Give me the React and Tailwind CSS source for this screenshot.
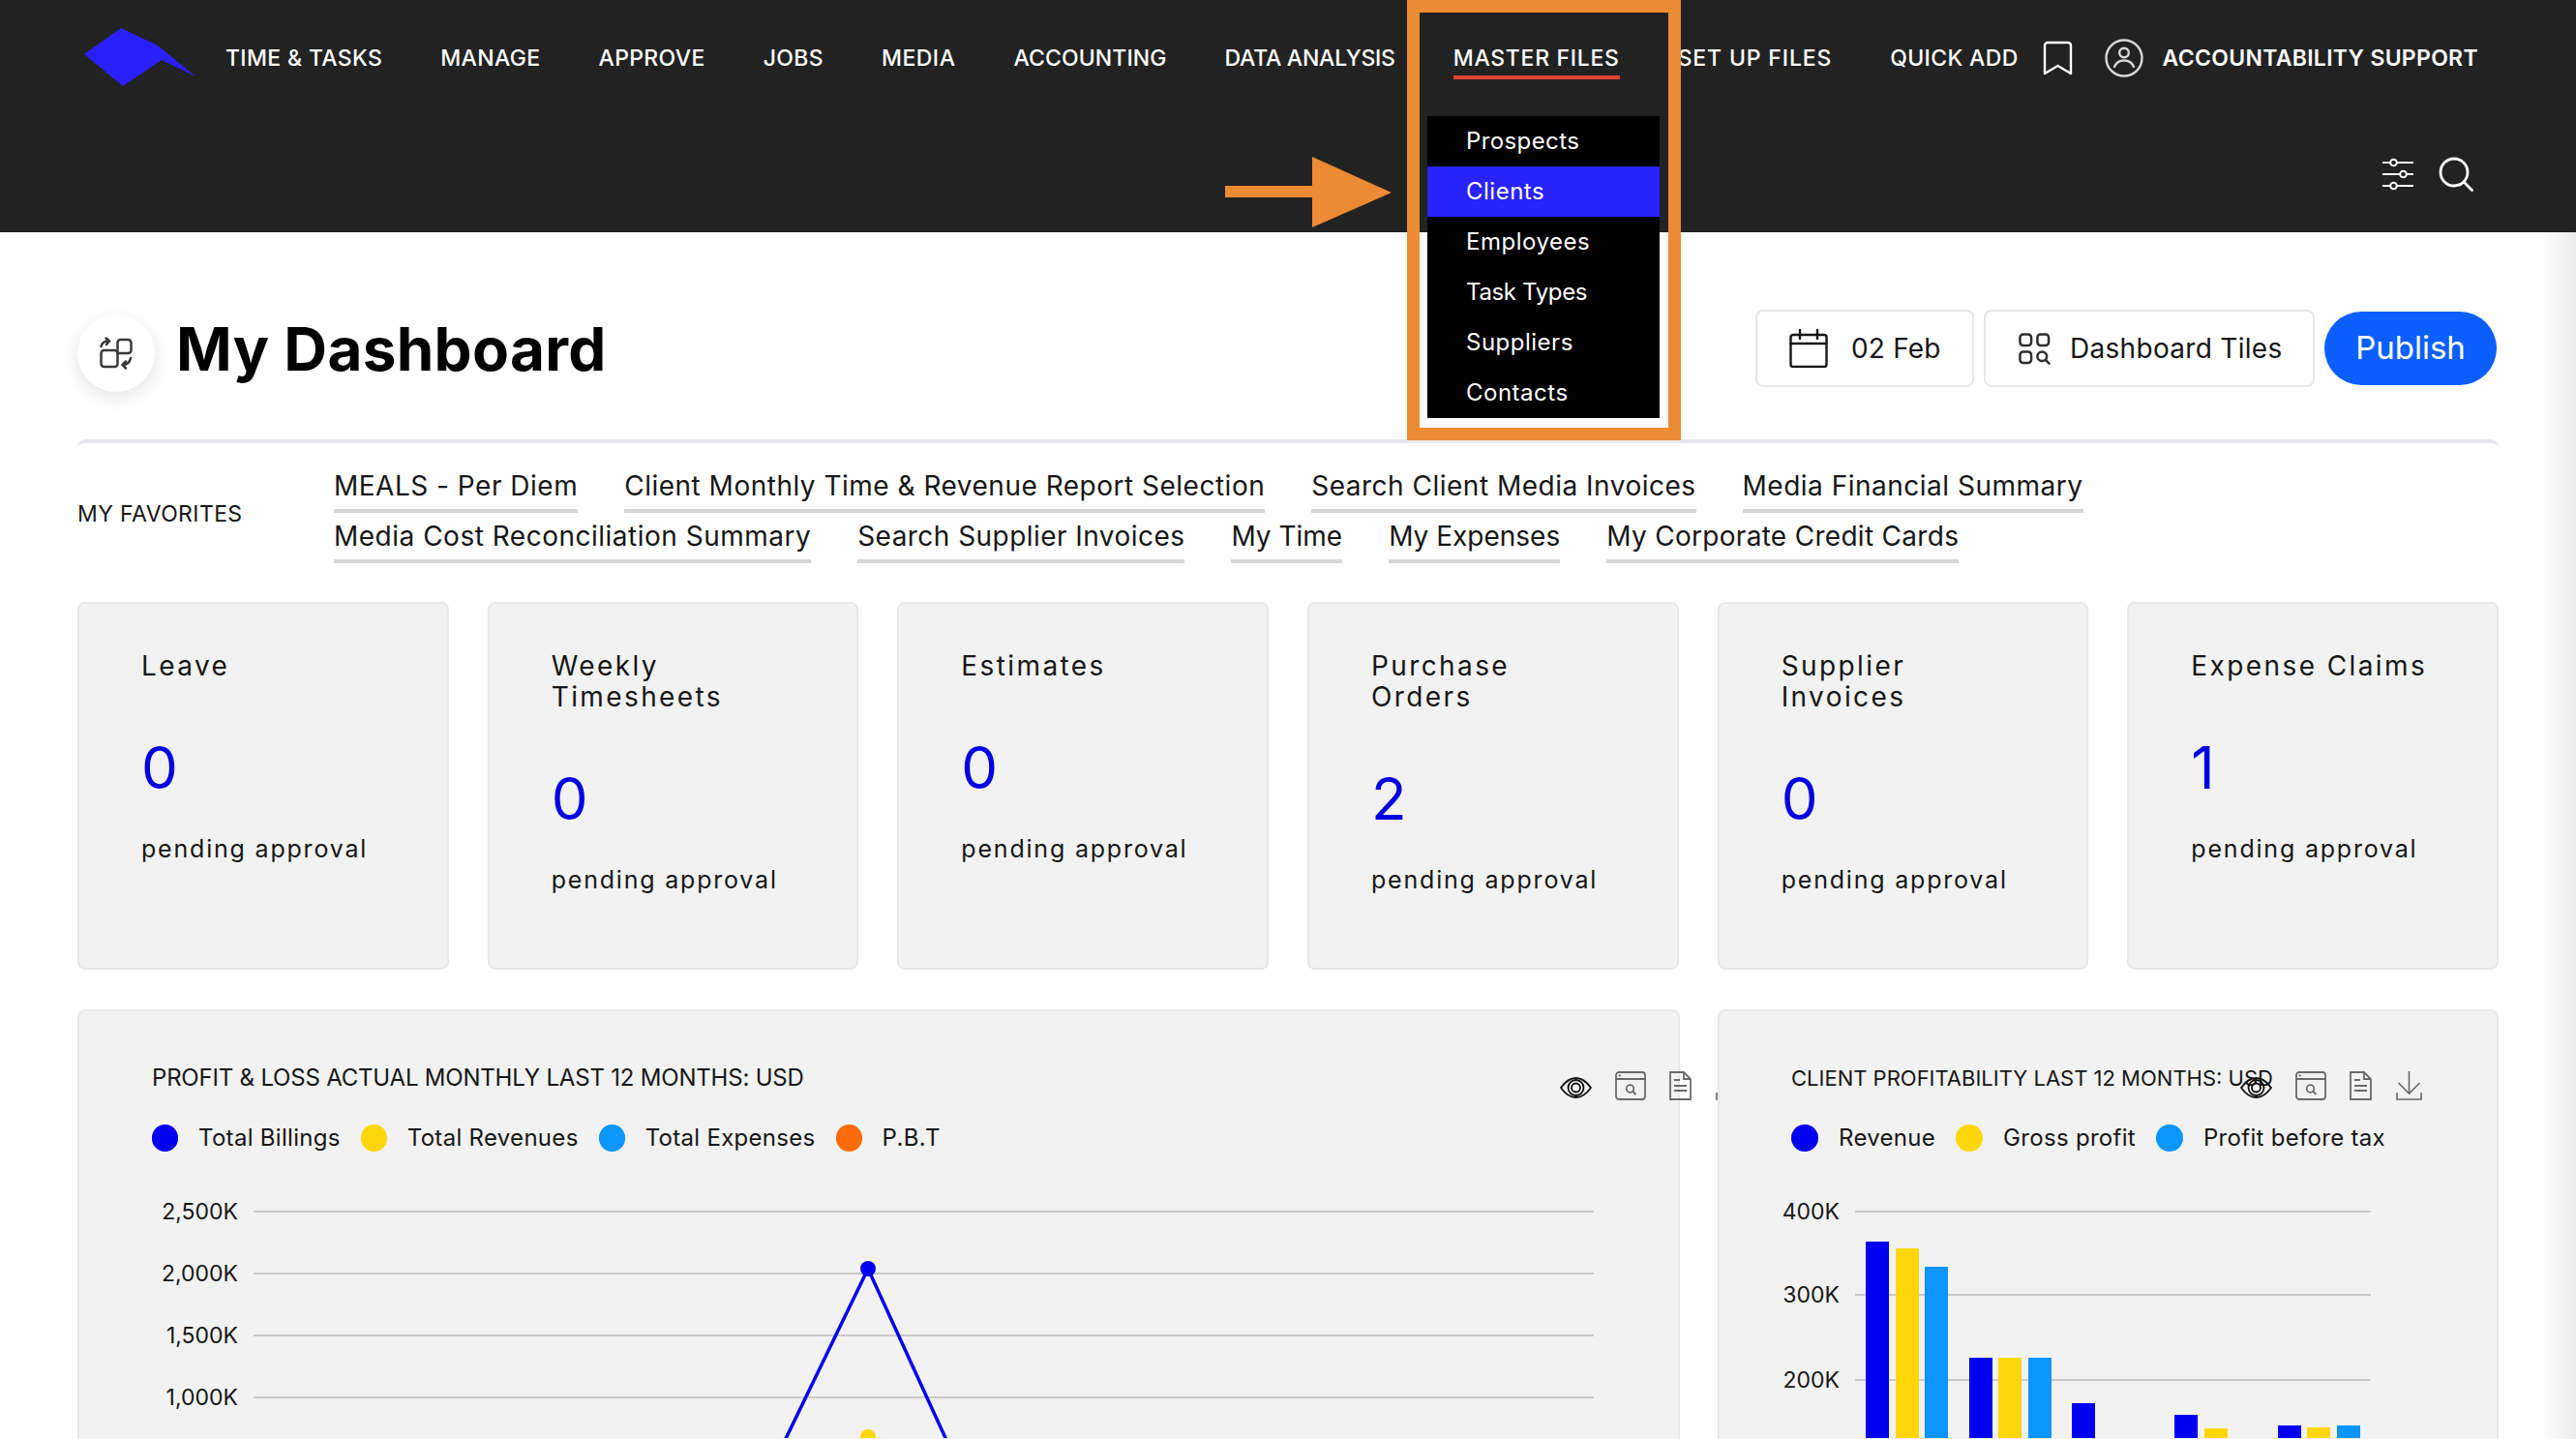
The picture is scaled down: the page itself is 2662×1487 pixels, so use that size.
import React from 'react';

const navItems = [
  { label: 'TIME & TASKS', spacing: 'tracking-[0.35px]' },
  { label: 'MANAGE', spacing: 'tracking-[0.35px]' },
  { label: 'APPROVE', spacing: 'tracking-[0.35px]' },
  { label: 'JOBS', spacing: 'tracking-[0.35px]' },
  { label: 'MEDIA', spacing: 'tracking-[0.5px]' },
  { label: 'ACCOUNTING', spacing: 'tracking-[0.1px]' },
  { label: 'DATA ANALYSIS', spacing: 'tracking-[-0.25px]' },
  { label: 'MASTER FILES', spacing: 'tracking-[0.7px]' },
  { label: 'SET UP FILES', spacing: 'tracking-[0.85px]' },
  { label: 'QUICK ADD', spacing: 'tracking-[0.35px]' },
];
const menuItems = [
  { label: 'Prospects', spacing: 'tracking-[0.4px]' },
  { label: 'Clients', spacing: 'tracking-[0.5px]' },
  { label: 'Employees', spacing: 'tracking-[0.5px]' },
  { label: 'Task Types', spacing: 'tracking-[-0.35px]' },
  { label: 'Suppliers', spacing: 'tracking-[0.5px]' },
  { label: 'Contacts', spacing: 'tracking-[0.5px]' },
];
const favoritesTop = [
  { label: 'MEALS - Per Diem', spacing: 'tracking-[0.5px]' },
  { label: 'Client Monthly Time & Revenue Report Selection', spacing: 'tracking-[0.5px]' },
  { label: 'Search Client Media Invoices', spacing: 'tracking-[0.5px]' },
  { label: 'Media Financial Summary', spacing: 'tracking-[0.5px]' },
];
const favoritesBottom = [
  { label: 'Media Cost Reconciliation Summary', spacing: 'tracking-[0.5px]' },
  { label: 'Search Supplier Invoices', spacing: 'tracking-[0.45px]' },
  { label: 'My Time', spacing: 'tracking-[0px]' },
  { label: 'My Expenses', spacing: 'tracking-[0px]' },
  { label: 'My Corporate Credit Cards', spacing: 'tracking-[0.3px]' },
];
const tiles = [
  { title: ['Leave'], value: 0 },
  { title: ['Weekly', 'Timesheets'], value: 0 },
  { title: ['Estimates'], value: 0 },
  { title: ['Purchase', 'Orders'], value: 2 },
  { title: ['Supplier', 'Invoices'], value: 0 },
  { title: ['Expense Claims'], value: 1 },
];

const BLUE = '#0000ee';
const YELLOW = '#ffd60a';
const SKY = '#0a95ff';
const ORANGE = '#ff6a0a';

const Logo = () => (
  <svg width="115" height="60" viewBox="87 30 115 60" className="shrink-0 -mt-[2px]">
    <polygon points="87,57 125,30 163,48 202,80 167,63 127,90" fill="#2a1fff" />
  </svg>
);

const BookmarkIcon = () => (
  <svg width="32" height="36" viewBox="0 0 32 36" fill="none" stroke="white" strokeWidth="2.4" strokeLinejoin="round" strokeLinecap="round">
    <path d="M2 5a3 3 0 0 1 3-3h21a3 3 0 0 1 3 3v29l-13.5-8L2 34z" />
  </svg>
);

const UserIcon = () => (
  <svg width="40" height="40" viewBox="0 0 40 40" fill="none" stroke="#d8d8d8" strokeWidth="2.4" strokeLinecap="round">
    <circle cx="20" cy="20" r="18.5" />
    <circle cx="20" cy="14.5" r="4.8" />
    <path d="M10 29c2-5 6-6.5 10-6.5s8 1.500 10 6.500" />
  </svg>
);

const SlidersIcon = () => (
  <svg width="34" height="34" viewBox="0 0 34 34" fill="none" stroke="white" strokeWidth="2">
    <path d="M1 5h8M16 5h17M1 17h18M26 17h7M1 29h8M16 29h17" />
    <circle cx="12.500" cy="5" r="3.300" />
    <circle cx="22.500" cy="17" r="3.300" />
    <circle cx="12.500" cy="29" r="3.300" />
  </svg>
);

const SearchIcon = () => (
  <svg width="36" height="36" viewBox="0 0 36 36" fill="none" stroke="white" strokeWidth="2.800" strokeLinecap="round">
    <circle cx="16" cy="16" r="14" />
    <path d="M26 26l8.500 8.500" />
  </svg>
);

const SwapIcon = () => (
  <svg width="34" height="34" viewBox="0 0 34 34" fill="none" stroke="#3a3a3a" strokeWidth="2.500" strokeLinecap="round">
    <rect x="1.500" y="14" width="17" height="17" rx="3" />
    <path d="M18.500 16V6a3 3 0 0 1 3-3h8a3 3 0 0 1 3 3v8a3 3 0 0 1-3 3H18.500" />
    <path d="M1.500 10c1-4 4-6 8-5.500M6.500 1.500l3.500 3-3 3.500" />
    <path d="M32 22c-1 5-4 7-8 7M27 25.500l-3.500 3.500 3.500 3.500" />
  </svg>
);

const CalendarIcon = () => (
  <svg width="40" height="40" viewBox="0 0 40 40" fill="none" stroke="#161616" strokeWidth="2.400" strokeLinecap="round">
    <rect x="1.500" y="6" width="37" height="33" rx="2.500" />
    <path d="M1.500 15h37M11 1v9M29 1v9" />
  </svg>
);

const TilesIcon = () => (
  <svg width="33" height="33" viewBox="0 0 34 34" fill="none" stroke="#2e2e2e" strokeWidth="2.600" strokeLinecap="round">
    <rect x="1.500" y="1.500" width="12" height="12" rx="3.500" />
    <rect x="20" y="1.500" width="12" height="12" rx="3.500" />
    <rect x="1.500" y="20" width="12" height="12" rx="3.500" />
    <circle cx="25" cy="25" r="5" />
    <path d="M29 29l3.500 3.500" />
  </svg>
);

const EyeIcon = () => (
  <svg width="33" height="22" viewBox="0 0 33 22" fill="none" stroke="#111" strokeWidth="1.800" className="mt-1">
    <path d="M1 11C6 4 11 1 16.500 1S27 4 32 11c-5 7-10 10-15.500 10S6 18 1 11z" />
    <circle cx="16.500" cy="11" r="8" />
    <circle cx="16.500" cy="11" r="4.500" />
  </svg>
);

const BrowserIcon = () => (
  <svg width="32" height="30" viewBox="0 0 32 30" fill="none" stroke="#6a6a6a" strokeWidth="1.800" strokeLinecap="round">
    <rect x="1" y="1" width="30" height="28" rx="3" />
    <path d="M1 8h30M4.500 4.500h.5" />
    <circle cx="15.500" cy="18" r="3.800" />
    <path d="M18.500 21l2.500 2.500" />
  </svg>
);

const DocIcon = () => (
  <svg width="23" height="30" viewBox="0 0 23 30" fill="none" stroke="#6a6a6a" strokeWidth="1.800">
    <path d="M1 1h14l7 7v21H1zM15 1v7h7" />
    <path d="M5 9h6M5 15h13M5 20h13" />
  </svg>
);

const DownloadIcon = () => (
  <svg width="27" height="30" viewBox="0 0 27 30" fill="none" stroke="#6a6a6a" strokeWidth="1.600">
    <path d="M13.500 0v23M2.500 12l11 11 11-11M1 22v7h25v-7" />
  </svg>
);

const Legend = ({ items, dotClass }) => (
  <div className="flex items-center gap-[21px] mt-[33px] h-[28px]">
    {items.map((item) => (
      <div key={item.label} className="flex items-center gap-[21px]">
        <span className={`${dotClass} h-[28px] rounded-full`} style={{ background: item.color }}></span>
        <span className="text-[24px] text-[#161616] whitespace-nowrap tracking-[0.3px]">{item.label}</span>
      </div>
    ))}
  </div>
);

const ChartIcons = ({ className }) => (
  <div className={`absolute top-[62px] flex items-center ${className}`}>
    <EyeIcon />
    <span className="w-[24px]"></span>
    <BrowserIcon />
    <span className="w-[24px]"></span>
    <DocIcon />
    <span className="w-[25px]"></span>
    <DownloadIcon />
  </div>
);

const ProfitLossChart = () => {
  const ticks = [['2,500K', 1253], ['2,000K', 1317], ['1,500K', 1381], ['1,000K', 1445]];
  return (
    <svg viewBox="82 1225 1652 262" width="1652" height="262" className="block mt-[34px]">
      {ticks.map(([label, y]) => (
        <g key={label}>
          <line x1="262" x2="1647" y1={y} y2={y} stroke="#c9c9c9" strokeWidth="2" />
          <text x="246" y={y + 8} textAnchor="end" fontSize="23" fill="#161616">{label}</text>
        </g>
      ))}
      <polyline points="806,1500 897,1312 983,1500" fill="none" stroke={BLUE} strokeWidth="3.500" />
      <circle cx="897" cy="1312" r="8" fill={BLUE} />
      <circle cx="897" cy="1486" r="8" fill={YELLOW} />
    </svg>
  );
};

const ProfitabilityChart = () => {
  const ticks = [['400K', 1253], ['300K', 1339], ['200K', 1427]];
  const bars = [
    [1928, 1284, BLUE], [1959, 1291, YELLOW], [1989, 1310, SKY],
    [2035, 1404, BLUE], [2065, 1404, YELLOW], [2096, 1404, SKY],
    [2141, 1451, BLUE],
    [2247, 1463, BLUE], [2278, 1477, YELLOW],
    [2354, 1474, BLUE], [2384, 1476, YELLOW], [2415, 1474, SKY],
  ];
  return (
    <svg viewBox="1777 1225 803 262" width="803" height="262" className="block mt-[34px]">
      {ticks.map(([label, y]) => (
        <g key={label}>
          <line x1="1917" x2="2450" y1={y} y2={y} stroke="#c9c9c9" strokeWidth="2" />
          <text x="1901" y={y + 8} textAnchor="end" fontSize="23" fill="#161616">{label}</text>
        </g>
      ))}
      {bars.map(([x, y, color]) => (
        <rect key={x} x={x} y={y} width="24" height={1500 - y} fill={color} />
      ))}
    </svg>
  );
};

const FavoriteRow = ({ links }) => (
  <div className="flex gap-[48px] h-[52px]">
    {links.map((link) => (
      <a key={link.label} className={`h-[52px] pt-[9px] border-b-4 border-[#d6d6d6] text-[28px] leading-[30px] text-[#161616] whitespace-nowrap ${link.spacing}`}>
        {link.label}
      </a>
    ))}
  </div>
);

export default function App() {
  return (
    <div className="relative w-full h-[1487px] overflow-hidden bg-white font-['Inter',sans-serif]">
      {/* Header */}
      <header className="h-[240px] bg-[#222222]">
        <div className="flex items-center h-[120px] pl-[87px]">
          <Logo />
          <nav className="flex items-center gap-[60px] ml-[31px]">
            {navItems.map((item) => (
              <span key={item.label} className={`relative text-[23px] font-medium text-white whitespace-nowrap ${item.spacing} ${item.label === 'MASTER FILES' ? 'after:absolute after:left-0 after:right-0 after:top-[35px] after:h-[4px] after:bg-[#e0432f]' : ''}`}>
                {item.label}
              </span>
            ))}
          </nav>
          <div className="flex items-center ml-[25px]">
            <BookmarkIcon />
            <span className="ml-[32px]"><UserIcon /></span>
            <span className="ml-[20px] text-[23px] font-semibold tracking-[0.3px] text-white whitespace-nowrap">ACCOUNTABILITY SUPPORT</span>
          </div>
        </div>
        <div className="flex justify-end items-center gap-[25px] pr-[106px] mt-[42px]">
          <SlidersIcon />
          <SearchIcon />
        </div>
      </header>

      {/* Dropdown del menu */}
      <div className="absolute left-[1475px] top-[120px] w-[240px] bg-black z-10">
        {menuItems.map((item) => (
          <div key={item.label} className={`h-[52px] pl-[40px] flex items-center text-[24px] text-white ${item.spacing} ${item.label === 'Clients' ? 'bg-[#2a22ff]' : ''}`}>
            {item.label}
          </div>
        ))}
      </div>

      {/* Anotacion naranja */}
      <div className="absolute left-[1454px] top-0 w-[283px] h-[455px] border-[13px] border-[#ec8b33] z-20"></div>
      <svg className="absolute left-[1266px] top-[162px] z-20" width="172" height="73" viewBox="0 0 172 73">
        <polygon points="0,30 90,30 90,0 172,37 90,73 90,42 0,42" fill="#ec8b33" />
      </svg>

      <main className="pl-[80px] pr-[80px]">
        {/* Titulo */}
        <div className="flex items-center justify-between h-[80px] mt-[80px]">
          <div className="flex items-center">
            <div className="w-[80px] h-[80px] mt-[10px] rounded-full bg-white shadow-[0_6px_18px_rgba(0,0,0,0.1)] flex items-center justify-center">
              <SwapIcon />
            </div>
            <h1 className="ml-[22px] text-[62px] font-bold text-black tracking-[0.3px] whitespace-nowrap">My Dashboard</h1>
          </div>
          <div className="flex items-center gap-[10px] mr-[2px]">
            <button className="h-[80px] w-[226px] rounded-[8px] border-2 border-[#e5e7eb] bg-white flex items-center pl-[33px] gap-[24px] text-[28px] tracking-[0.2px] text-[#161616]">
              <CalendarIcon />
              <span>02 Feb</span>
            </button>
            <button className="h-[80px] w-[342px] rounded-[8px] border-2 border-[#e5e7eb] bg-white flex items-center pl-[34px] gap-[20px] text-[28px] tracking-[0.3px] text-[#161616]">
              <TilesIcon />
              <span className="whitespace-nowrap">Dashboard Tiles</span>
            </button>
            <button className="h-[76px] w-[178px] rounded-[38px] bg-[#0b5fff] text-white text-[33px]">Publish</button>
          </div>
        </div>

        {/* Favoritos */}
        <div className="mt-[54px] h-[168px] pt-[20px] border-t-4 border-[#e5e7eb] rounded-t-[8px] flex items-start">
          <div className="w-[265px] mt-[36px] text-[23px] tracking-[0.4px] text-[#161616] whitespace-nowrap">MY FAVORITES</div>
          <div>
            <FavoriteRow links={favoritesTop} />
            <FavoriteRow links={favoritesBottom} />
          </div>
        </div>

        {/* Tarjetas de aprobacion */}
        <div className="grid grid-cols-6 gap-[40px]">
          {tiles.map((tile) => (
            <div key={tile.title.join(' ')} className="h-[380px] rounded-[8px] border-2 border-[#e8e8e8] bg-[#f2f2f2] pl-[64px] pt-[48px]">
              <div className="text-[28px] leading-[32px] tracking-[2.4px] text-[#161616]">
                {tile.title.map((line) => (
                  <div key={line}>{line}</div>
                ))}
              </div>
              <div className="mt-[53px] text-[60px] leading-[72px] text-[#0000e0]">{tile.value}</div>
              <div className="mt-[32px] text-[25px] leading-[32px] tracking-[1.8px] text-[#161616] whitespace-nowrap">pending approval</div>
            </div>
          ))}
        </div>

        {/* Graficos */}
        <div className="grid grid-cols-[1656px_807px] gap-[39px] mt-[41px]">
          <div className="relative h-[500px] rounded-[8px] border-2 border-[#e8e8e8] bg-[#f2f2f2] pt-[54px]">
            <div className="pl-[75px]">
              <div className="text-[24px] leading-[30px] tracking-[-0.2px] text-[#161616] whitespace-nowrap">PROFIT &amp; LOSS ACTUAL MONTHLY LAST 12 MONTHS: USD</div>
              <Legend
                dotClass="w-[27px]"
                items={[
                  { label: 'Total Billings', color: BLUE },
                  { label: 'Total Revenues', color: YELLOW },
                  { label: 'Total Expenses', color: SKY },
                  { label: 'P.B.T', color: ORANGE },
                ]}
              />
            </div>
            <ProfitLossChart />
            <ChartIcons className="right-[-66px]" />
          </div>
          <div className="relative h-[500px] rounded-[8px] border-2 border-[#e8e8e8] bg-[#f2f2f2] pt-[54px]">
            <div className="pl-[74px]">
              <div className="text-[22px] leading-[30px] text-[#161616] whitespace-nowrap">CLIENT PROFITABILITY LAST 12 MONTHS: USD</div>
              <Legend
                dotClass="w-[28px]"
                items={[
                  { label: 'Revenue', color: BLUE },
                  { label: 'Gross profit', color: YELLOW },
                  { label: 'Profit before tax', color: SKY },
                ]}
              />
            </div>
            <ProfitabilityChart />
            <ChartIcons className="right-[77px]" />
          </div>
        </div>
      </main>

      {/* Sombra del panel lateral */}
      <div className="absolute right-0 top-[240px] bottom-0 w-[36px] bg-linear-to-r from-white/0 to-[#ebebeb]"></div>
    </div>
  );
}
